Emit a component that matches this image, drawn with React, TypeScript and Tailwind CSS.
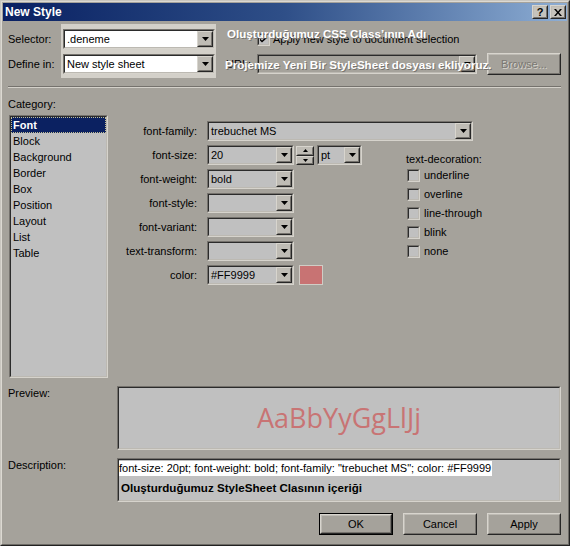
import type { ReactNode } from 'react';

const categories = ['Font', 'Block', 'Background', 'Border', 'Box', 'Position', 'Layout', 'List', 'Table'];
const decorations = ['underline', 'overline', 'line-through', 'blink', 'none'];

function Arrow({ dir = 'down' }: { dir?: 'up' | 'down' }) {
    return (
        <svg width="7" height="4" viewBox="0 0 7 4" className="block">
            <path d={dir === 'down' ? 'M0 0h7L3.5 4z' : 'M0 4h7L3.5 0z'} fill="#000" />
        </svg>
    );
}

function Sunken({ className = '', inner = '', children }: { className?: string; inner?: string; children?: ReactNode }) {
    return (
        <div className={`flex border border-t-[#75726d] border-l-[#75726d] border-r-[#d6d3cc] border-b-[#d6d3cc] ${className}`}>
            <div className={`flex-1 min-w-0 border border-t-[#2b2b2b] border-l-[#2b2b2b] border-r-[#bcb9b2] border-b-[#bcb9b2] ${inner}`}>
                {children}
            </div>
        </div>
    );
}

function Raised({ className = '', inner = '', children }: { className?: string; inner?: string; children?: ReactNode }) {
    return (
        <div className={`flex border border-t-[#d8d5ce] border-l-[#d8d5ce] border-r-[#262626] border-b-[#262626] ${className}`}>
            <div className={`flex-1 flex items-center justify-center border border-t-[#bebbb4] border-l-[#bebbb4] border-r-[#75726d] border-b-[#75726d] ${inner}`}>
                {children}
            </div>
        </div>
    );
}

function DropButton() {
    return (
        <Raised className="w-[16px] h-full shrink-0" inner="bg-[#bfbcb5]">
            <Arrow />
        </Raised>
    );
}

function Combo({ value = '', className = '', field = 'bg-[#c0c0c0]' }: { value?: string; className?: string; field?: string }) {
    return (
        <Sunken className={`h-[20px] shrink-0 ${className}`} inner={`flex ${field}`}>
            <span className="flex-1 pl-[2px] leading-[16px] whitespace-nowrap overflow-hidden">{value}</span>
            <DropButton />
        </Sunken>
    );
}

function Check({ checked }: { checked?: boolean }) {
    return (
        <Sunken className="w-[13px] h-[13px] shrink-0" inner="bg-[#c0c0c0] flex items-center justify-center">
            {checked && (
                <svg width="7" height="7" viewBox="0 0 7 7" className="block">
                    <path d="M0 2.5l2 2L7 0v2L2 6.5 0 4.5z" fill="#000" />
                </svg>
            )}
        </Sunken>
    );
}

function Button({ label, isDefault, disabled }: { label: string; isDefault?: boolean; disabled?: boolean }) {
    const text = <span className={disabled ? 'text-[#7b7873] [text-shadow:1px_1px_0_#d6d3cc]' : ''}>{label}</span>;
    if (isDefault) {
        return (
            <div className="flex w-[74px] h-[22px] border border-black">
                <Raised className="flex-1">{text}</Raised>
            </div>
        );
    }
    return <Raised className="w-[74px] h-[22px]">{text}</Raised>;
}

function FieldRow({ label, children }: { label: string; children: ReactNode }) {
    return (
        <div className="flex items-center h-[20px]">
            <span className="w-[89px] text-right pr-0 whitespace-nowrap">{label}</span>
            <div className="ml-[10px] flex items-center">{children}</div>
        </div>
    );
}

export default function App() {
    return (
        <div className="relative w-[570px] h-[546px] overflow-hidden bg-[#a5a29b] border border-t-[#c9c6bf] border-l-[#c9c6bf] border-r-[#222] border-b-[#222] font-['Liberation_Sans',Arial,sans-serif] text-[11px] text-black">
            <div className="h-full flex flex-col border border-t-[#dcd9d2] border-l-[#dcd9d2] border-r-[#6d6b66] border-b-[#6d6b66] p-[1px]">
                <div className="h-[18px] shrink-0 flex items-center bg-linear-to-r from-[#0a2062] via-[#2f4f88] to-[#8eaed4] pl-[2px] pr-[1px]">
                    <span className="flex-1 text-white font-bold text-[12px] leading-[18px]">New Style</span>
                    <Raised className="w-[16px] h-[14px]" inner="bg-[#c6c3bc]">
                        <span className="font-bold text-[11px] leading-none">?</span>
                    </Raised>
                    <Raised className="ml-[2px] w-[16px] h-[14px]" inner="bg-[#c6c3bc]">
                        <svg width="8" height="7" viewBox="0 0 8 7" className="block">
                            <path d="M0 0h2l2 2.5L6 0h2L5 3.5 8 7H6L4 4.5 2 7H0l3-3.5z" fill="#000" />
                        </svg>
                    </Raised>
                </div>

                <div className="flex-1 flex flex-col pl-[5px] pr-[6px]">
                    <div className="mt-[3px] flex items-start">
                        <div className="w-[53px] pt-[5px]">
                            <div className="h-[20px] leading-[20px]">Selector:</div>
                            <div className="mt-[5px] h-[20px] leading-[20px]">Define in:</div>
                        </div>
                        <div className="w-[155px] h-[54px] bg-[#d3d0c9] pt-[5px] pl-[2px] flex flex-col gap-[5px]">
                            <Combo value=".deneme" className="w-[152px]" field="bg-white" />
                            <Combo value="New style sheet" className="w-[152px]" field="bg-white" />
                        </div>
                        <div className="ml-[10px] flex-1 pt-[5px]">
                            <div className="h-[20px] flex items-center pl-[31px]">
                                <Check checked />
                                <span className="ml-[3px] whitespace-nowrap">Apply new style to document selection</span>
                            </div>
                            <div className="mt-[4px] h-[22px] flex items-center">
                                <span className="w-[31px]">URL:</span>
                                <Combo className="w-[220px]" field="bg-[#a5a29b]" />
                                <div className="ml-[10px]">
                                    <Button label="Browse..." disabled />
                                </div>
                            </div>
                        </div>
                    </div>

                    <div className="mt-[8px] ml-[0px] h-[2px] border-t border-t-[#75726d] border-b border-b-[#d4d1ca]" />

                    <div className="mt-[9px] leading-[14px]">Category:</div>

                    <div className="mt-[4px] flex items-start">
                        <Sunken className="ml-[1px] w-[99px] h-[263px] shrink-0" inner="bg-[#c0c0c0]">
                            {categories.map((c, i) =>
                                i === 0 ? (
                                    <div key={c} className="h-[16px] leading-[14px] bg-[#0b2161] text-white font-bold pl-[1px] border border-dotted border-[#c4bf94]">
                                        {c}
                                    </div>
                                ) : (
                                    <div key={c} className="h-[16px] leading-[16px] pl-[2px]">
                                        {c}
                                    </div>
                                )
                            )}
                        </Sunken>

                        <div className="flex-1 pt-[6px]">
                            <FieldRow label="font-family:">
                                <Combo value="trebuchet MS" className="w-[266px]" />
                            </FieldRow>
                            <div className="mt-[4px] flex items-start">
                                <div className="w-[298px] flex flex-col gap-[4px]">
                                    <FieldRow label="font-size:">
                                        <Combo value="20" className="w-[87px]" />
                                        <div className="ml-[2px] w-[18px] h-[19px] flex flex-col">
                                            <Raised className="h-[10px]" inner="bg-[#bfbcb5]">
                                                <svg width="5" height="3" viewBox="0 0 5 3" className="block">
                                                    <path d="M0 3h5L2.5 0z" fill="#000" />
                                                </svg>
                                            </Raised>
                                            <Raised className="h-[9px]" inner="bg-[#bfbcb5]">
                                                <svg width="5" height="3" viewBox="0 0 5 3" className="block">
                                                    <path d="M0 0h5L2.5 3z" fill="#000" />
                                                </svg>
                                            </Raised>
                                        </div>
                                        <Combo value="pt" className="ml-[3px] w-[45px]" />
                                    </FieldRow>
                                    <FieldRow label="font-weight:">
                                        <Combo value="bold" className="w-[87px]" />
                                    </FieldRow>
                                    <FieldRow label="font-style:">
                                        <Combo className="w-[87px]" />
                                    </FieldRow>
                                    <FieldRow label="font-variant:">
                                        <Combo className="w-[87px]" />
                                    </FieldRow>
                                    <FieldRow label="text-transform:">
                                        <Combo className="w-[87px]" />
                                    </FieldRow>
                                    <FieldRow label="color:">
                                        <Combo value="#FF9999" className="w-[87px]" />
                                        <div className="ml-[5px] w-[24px] h-[20px] bg-[#c87373] border border-[#d0cdc6]" />
                                    </FieldRow>
                                </div>
                                <div className="pt-[7px]">
                                    <div className="leading-[14px]">text-decoration:</div>
                                    {decorations.map((d) => (
                                        <div key={d} className="h-[19px] flex items-center pl-[1px]">
                                            <Check />
                                            <span className="ml-[4px]">{d}</span>
                                        </div>
                                    ))}
                                </div>
                            </div>
                        </div>
                    </div>

                    <div className="mt-[8px] flex items-start">
                        <span className="w-[109px] leading-[14px]">Preview:</span>
                        <Sunken className="flex-1 h-[64px]" inner="bg-[#c0c0c0] flex items-center justify-center">
                            <span className="font-['Open_Sans',sans-serif] text-[27px] leading-none text-[#c87474] pb-[2px]">AaBbYyGgLlJj</span>
                        </Sunken>
                    </div>

                    <div className="mt-[8px] flex items-start">
                        <span className="w-[109px] leading-[14px]">Description:</span>
                        <Sunken className="flex-1 h-[44px]" inner="bg-[#c0c0c0]">
                            <div className="mt-[1px] inline-block bg-white leading-[15px] pr-[1px] whitespace-nowrap">
                                font-size: 20pt; font-weight: bold; font-family: "trebuchet MS"; color: #FF9999
                            </div>
                            <div className="mt-[4px] pl-[2px] font-bold text-[11.6px] leading-[14px] whitespace-nowrap">
                                Oluşturduğumuz StyleSheet Clasının içeriği
                            </div>
                        </Sunken>
                    </div>

                    <div className="mt-[11px] flex justify-end gap-[10px]">
                        <Button label="OK" isDefault />
                        <Button label="Cancel" />
                        <Button label="Apply" />
                    </div>
                </div>
            </div>

            <div className="absolute left-[226px] top-[26px] text-white font-bold text-[11.6px] leading-[14px] whitespace-nowrap [text-shadow:1px_1px_0_#77746f]">
                Oluşturduğumuz CSS Class’ının Adı
            </div>
            <div className="absolute left-[224px] top-[57px] text-white font-bold text-[11.6px] leading-[14px] whitespace-nowrap [text-shadow:1px_1px_0_#77746f]">
                Projemize Yeni Bir StyleSheet dosyası ekliyoruz.
            </div>
        </div>
    );
}
